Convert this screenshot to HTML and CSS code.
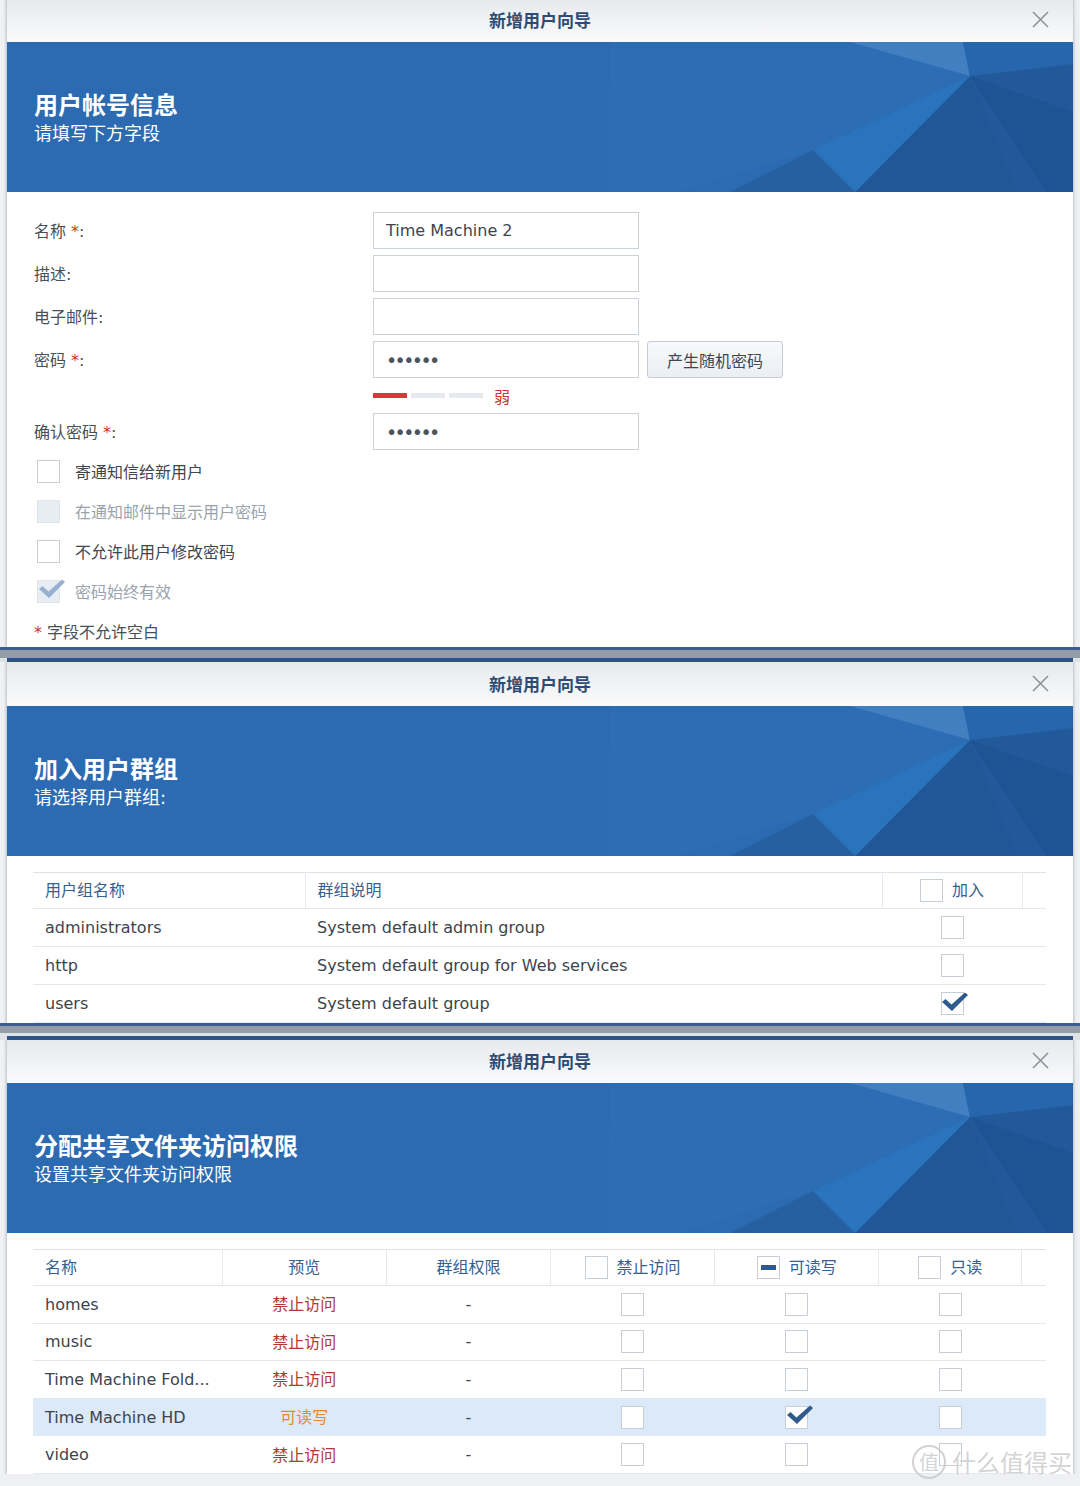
FILE: index.html
```html
<!DOCTYPE html>
<html lang="zh-CN">
<head>
  <meta charset="UTF-8">
  <title>新增用户向导</title>
  <link rel="stylesheet" href="styles.css">
</head>
<body>
<div class="page">

  <!-- 第一步：用户帐号信息 -->
  <div class="shot">
    <div class="side side-left"></div>
    <div class="dialog">
      <div class="titlebar tb-first">
        <span></span>
        <span class="title">新增用户向导</span>
        <span class="close"><svg width="17" height="17" viewBox="0 0 17 17"><path d="M1 1 L16 16 M16 1 L1 16" stroke="#8d939a" stroke-width="1.6" fill="none"/></svg></span>
      </div>
      <div class="banner">
        <svg class="facets" viewBox="0 0 1066 150" preserveAspectRatio="none">
          <rect width="1066" height="150" fill="#2c6ab1"/>
          <polygon points="603,0 843,0 963,34 806,108 673,150 600,150" fill="#2d6db4"/>
          <polygon points="843,0 956,0 963,34" fill="#417fc0"/>
          <polygon points="956,0 1066,0 1066,22 963,34" fill="#2666ad"/>
          <polygon points="963,34 1066,22 1066,150 1012,150" fill="#22599a"/>
          <polygon points="963,34 1066,70 1066,150 1040,150" fill="#1e5494"/>
          <polygon points="963,34 1012,150 848,150" fill="#215796"/>
          <polygon points="806,108 963,34 848,150" fill="#2a74bd"/>
          <polygon points="723,150 806,108 848,150" fill="#2660a0"/>
        </svg>
        <div class="banner-text">
          <h1>用户帐号信息</h1>
          <p>请填写下方字段</p>
        </div>
      </div>
      <div class="form-body">
        <div class="form-grid">
          <label class="field-label">名称 <span class="req">*</span>:</label>
          <div class="input">Time Machine 2</div>
          <span></span>

          <label class="field-label">描述:</label>
          <div class="input"></div>
          <span></span>

          <label class="field-label">电子邮件:</label>
          <div class="input"></div>
          <span></span>

          <label class="field-label">密码 <span class="req">*</span>:</label>
          <div class="input"><span class="dots">••••••</span></div>
          <button class="btn">产生随机密码</button>

          <span></span>
          <div class="strength">
            <span class="seg seg-on"></span><span class="seg"></span><span class="seg"></span>
            <span class="weak">弱</span>
          </div>
          <span></span>

          <label class="field-label">确认密码 <span class="req">*</span>:</label>
          <div class="input"><span class="dots">••••••</span></div>
          <span></span>
        </div>

        <div class="checks">
          <div class="check-row"><span class="box"></span><span>寄通知信给新用户</span></div>
          <div class="check-row disabled"><span class="box box-off"></span><span>在通知邮件中显示用户密码</span></div>
          <div class="check-row"><span class="box"></span><span>不允许此用户修改密码</span></div>
          <div class="check-row disabled"><span class="box box-off"><svg class="tick" width="28" height="24" viewBox="0 0 28 24"><polygon points="1,11 4.5,8 10.5,13.5 24,1.5 27,4 11,20" fill="#97b0cf"/></svg></span><span>密码始终有效</span></div>
        </div>
        <div class="note"><span class="req">*</span> 字段不允许空白</div>
      </div>
    </div>
    <div class="side side-right"></div>
  </div>

  <div class="seam seam-a"></div>

  <!-- 第二步：加入用户群组 -->
  <div class="shot">
    <div class="side side-left side-top"></div>
    <div class="dialog dialog-top">
      <div class="titlebar tb-second">
        <span></span>
        <span class="title">新增用户向导</span>
        <span class="close"><svg width="17" height="17" viewBox="0 0 17 17"><path d="M1 1 L16 16 M16 1 L1 16" stroke="#8d939a" stroke-width="1.6" fill="none"/></svg></span>
      </div>
      <div class="banner">
        <svg class="facets" viewBox="0 0 1066 150" preserveAspectRatio="none">
          <rect width="1066" height="150" fill="#2c6ab1"/>
          <polygon points="603,0 843,0 963,34 806,108 673,150 600,150" fill="#2d6db4"/>
          <polygon points="843,0 956,0 963,34" fill="#417fc0"/>
          <polygon points="956,0 1066,0 1066,22 963,34" fill="#2666ad"/>
          <polygon points="963,34 1066,22 1066,150 1012,150" fill="#22599a"/>
          <polygon points="963,34 1066,70 1066,150 1040,150" fill="#1e5494"/>
          <polygon points="963,34 1012,150 848,150" fill="#215796"/>
          <polygon points="806,108 963,34 848,150" fill="#2a74bd"/>
          <polygon points="723,150 806,108 848,150" fill="#2660a0"/>
        </svg>
        <div class="banner-text">
          <h1>加入用户群组</h1>
          <p>请选择用户群组:</p>
        </div>
      </div>
      <div class="table-body">
        <table class="grid groups">
          <colgroup><col class="c-gname"><col class="c-gdesc"><col class="c-join"><col class="c-pad"></colgroup>
          <thead>
            <tr><th>用户组名称</th><th>群组说明</th><th class="mid"><span class="head-check"><span class="box"></span><span>加入</span></span></th><th class="pad"></th></tr>
          </thead>
          <tbody>
            <tr><td>administrators</td><td>System default admin group</td><td class="mid"><span class="box"></span></td><td></td></tr>
            <tr><td>http</td><td>System default group for Web services</td><td class="mid"><span class="box"></span></td><td></td></tr>
            <tr><td>users</td><td>System default group</td><td class="mid"><span class="box"><svg class="tick" width="28" height="24" viewBox="0 0 28 24"><polygon points="1,11 4.5,8 10.5,13.5 24,1.5 27,4 11,20" fill="#2e5a8c"/></svg></span></td><td></td></tr>
          </tbody>
        </table>
      </div>
    </div>
    <div class="side side-right side-top"></div>
  </div>

  <div class="seam seam-b"></div>

  <!-- 第三步：分配共享文件夹访问权限 -->
  <div class="shot">
    <div class="side side-left side-top"></div>
    <div class="dialog dialog-top">
      <div class="titlebar tb-third">
        <span></span>
        <span class="title">新增用户向导</span>
        <span class="close"><svg width="17" height="17" viewBox="0 0 17 17"><path d="M1 1 L16 16 M16 1 L1 16" stroke="#8d939a" stroke-width="1.6" fill="none"/></svg></span>
      </div>
      <div class="banner">
        <svg class="facets" viewBox="0 0 1066 150" preserveAspectRatio="none">
          <rect width="1066" height="150" fill="#2c6ab1"/>
          <polygon points="603,0 843,0 963,34 806,108 673,150 600,150" fill="#2d6db4"/>
          <polygon points="843,0 956,0 963,34" fill="#417fc0"/>
          <polygon points="956,0 1066,0 1066,22 963,34" fill="#2666ad"/>
          <polygon points="963,34 1066,22 1066,150 1012,150" fill="#22599a"/>
          <polygon points="963,34 1066,70 1066,150 1040,150" fill="#1e5494"/>
          <polygon points="963,34 1012,150 848,150" fill="#215796"/>
          <polygon points="806,108 963,34 848,150" fill="#2a74bd"/>
          <polygon points="723,150 806,108 848,150" fill="#2660a0"/>
        </svg>
        <div class="banner-text">
          <h1>分配共享文件夹访问权限</h1>
          <p>设置共享文件夹访问权限</p>
        </div>
      </div>
      <div class="table-body">
        <table class="grid shares">
          <colgroup><col class="c-name"><col class="c-mid"><col class="c-mid"><col class="c-mid"><col class="c-mid"><col class="c-ro"><col class="c-pad"></colgroup>
          <thead>
            <tr>
              <th>名称</th>
              <th class="mid">预览</th>
              <th class="mid">群组权限</th>
              <th class="mid"><span class="head-check"><span class="box"></span><span>禁止访问</span></span></th>
              <th class="mid"><span class="head-check"><span class="box box-part"><span class="bar"></span></span><span>可读写</span></span></th>
              <th class="mid"><span class="head-check"><span class="box"></span><span>只读</span></span></th>
              <th class="pad"></th>
            </tr>
          </thead>
          <tbody>
            <tr><td>homes</td><td class="mid deny">禁止访问</td><td class="mid">-</td><td class="mid"><span class="box"></span></td><td class="mid"><span class="box"></span></td><td class="mid"><span class="box"></span></td><td></td></tr>
            <tr><td>music</td><td class="mid deny">禁止访问</td><td class="mid">-</td><td class="mid"><span class="box"></span></td><td class="mid"><span class="box"></span></td><td class="mid"><span class="box"></span></td><td></td></tr>
            <tr><td>Time Machine Fold...</td><td class="mid deny">禁止访问</td><td class="mid">-</td><td class="mid"><span class="box"></span></td><td class="mid"><span class="box"></span></td><td class="mid"><span class="box"></span></td><td></td></tr>
            <tr class="selected"><td>Time Machine HD</td><td class="mid rw">可读写</td><td class="mid">-</td><td class="mid"><span class="box"></span></td><td class="mid"><span class="box"><svg class="tick" width="28" height="24" viewBox="0 0 28 24"><polygon points="1,11 4.5,8 10.5,13.5 24,1.5 27,4 11,20" fill="#2e5a8c"/></svg></span></td><td class="mid"><span class="box"></span></td><td></td></tr>
            <tr><td>video</td><td class="mid deny">禁止访问</td><td class="mid">-</td><td class="mid"><span class="box"></span></td><td class="mid"><span class="box"></span></td><td class="mid"><span class="box"></span></td><td></td></tr>
          </tbody>
        </table>
      </div>
    </div>
    <div class="side side-right side-top"></div>
  </div>

  <div class="watermark"><span class="wm-ring">值</span>什么值得买</div>
</div>
</body>
</html>
```

FILE: styles.css
```css
* {
  box-sizing: border-box;
}

body {
  margin: 0;
  background: #eef0f3;
  font-family: "DejaVu Sans", "Noto Sans CJK SC", sans-serif;
  color: #444c55;
}

.page {
  position: relative;
  width: 1080px;
  height: 1486px;
  overflow: hidden;
}

.shot {
  display: flex;
}

/* bandes de la fenêtre derrière le dialogue */
.side {
  width: 7px;
  flex: none;
}

.side-left {
  background: linear-gradient(to right, #f2f3f5 0, #eceef1 60%, #c4c9cf 100%);
}

.side-right {
  background: linear-gradient(to right, #c4c9cf 0, #e9ebee 35%, #f2f3f5 100%);
}

.side-top {
  border-top: 4px solid #dde1e5;
}

.dialog {
  width: 1066px;
  flex: none;
  background: #fff;
}

.dialog-top {
  border-top: 4px solid #2d5286;
}

/* barre de titre */
.titlebar {
  display: grid;
  grid-template-columns: 1fr auto 1fr;
  align-items: center;
  padding-bottom: 2px;
  background: linear-gradient(#e6e9ed, #fbfbfc);
}

.tb-first {
  height: 42px;
  padding-bottom: 3px;
}

.tb-second {
  height: 44px;
}

.tb-third {
  height: 43px;
}

.title {
  font-size: 17px;
  font-weight: bold;
  color: #2c4c74;
}

.close {
  justify-self: end;
  margin-right: 24px;
  display: flex;
}

/* bannière bleue */
.banner {
  display: grid;
  height: 150px;
}

.facets,
.banner-text {
  grid-area: 1 / 1;
}

.facets {
  width: 1066px;
  height: 150px;
  display: block;
}

.banner-text {
  align-self: center;
  padding-left: 27px;
  padding-top: 4px;
  color: #fff;
}

.banner-text h1 {
  margin: 0;
  font-size: 24px;
  line-height: 30px;
  font-weight: bold;
}

.banner-text p {
  margin: 0;
  font-size: 18px;
  line-height: 26px;
}

/* formulaire */
.form-body {
  height: 455px;
  padding: 20px 27px 0;
}

.form-grid {
  display: grid;
  grid-template-columns: 331px 266px auto;
  column-gap: 8px;
  row-gap: 6px;
  align-items: center;
}

.field-label {
  font-size: 16px;
  color: #474f58;
  padding-bottom: 2px;
}

.req {
  color: #c9372c;
}

.input {
  height: 37px;
  border: 1px solid #cbd2da;
  padding: 0 12px;
  display: flex;
  align-items: center;
  font-size: 16px;
  color: #3d454e;
}

.dots {
  font-size: 19px;
  letter-spacing: -2.6px;
  color: #4c535b;
}

.btn {
  justify-self: start;
  height: 37px;
  padding: 0 19px;
  border: 1px solid #c5ccd5;
  border-radius: 3px;
  background: linear-gradient(#f8f9fb, #eaeef3);
  font-family: inherit;
  font-size: 16px;
  color: #3e4751;
}

.strength {
  height: 23px;
  display: flex;
  align-items: center;
  gap: 4px;
}

.seg {
  width: 34px;
  height: 5px;
  background: #e6eaee;
}

.seg-on {
  background: #d9383a;
}

.weak {
  margin-left: 7px;
  font-size: 16px;
  color: #c9372c;
}

.checks {
  margin-top: 1px;
  display: flex;
  flex-direction: column;
}

.check-row {
  height: 40px;
  display: flex;
  align-items: center;
  gap: 15px;
  padding-left: 3px;
  font-size: 16px;
  color: #3f464e;
}

.check-row.disabled {
  color: #9aa3ad;
}

.note {
  margin-top: 11px;
  font-size: 16px;
  line-height: 22px;
  color: #474f58;
}

/* cases à cocher */
.box {
  width: 23px;
  height: 23px;
  flex: none;
  display: inline-flex;
  align-items: center;
  justify-content: center;
  border: 1px solid #c7ced6;
  background: #fff;
  overflow: visible;
  vertical-align: middle;
}

.box-off {
  background: #e8edf3;
  border-color: #dfe5eb;
}

.tick {
  flex: none;
  margin: -2px -6px 0 0;
}

.box-part .bar {
  width: 15px;
  height: 5px;
  background: #2d5a8e;
}

.head-check {
  display: inline-flex;
  align-items: center;
  gap: 9px;
  vertical-align: middle;
  line-height: 23px;
  margin-top: 3px;
}

/* tableaux */
.table-body {
  padding: 16px 27px 0 26px;
}

.grid {
  width: 1013px;
  border-collapse: collapse;
  table-layout: fixed;
  font-size: 16px;
}

.grid th {
  height: 36px;
  padding: 0 12px 3px;
  text-align: left;
  font-weight: normal;
  color: #36608f;
  vertical-align: middle;
  border-top: 1px solid #dde2e8;
  border-bottom: 1px solid #e3e7ec;
  border-right: 1px solid #e6eaee;
}

.grid th.pad {
  border-right: none;
}

.grid td {
  padding: 0 12px;
  color: #3c444d;
  border-bottom: 1px solid #e4e8ec;
  white-space: nowrap;
  overflow: hidden;
}

.groups td {
  height: 38px;
}

.shares td {
  height: 37.6px;
}

.grid .mid {
  text-align: center;
}

.grid td.deny,
.grid td.rw {
  padding-bottom: 2px;
}

.c-gname {
  width: 272px;
}

.c-gdesc {
  width: 577px;
}

.c-join {
  width: 140px;
}

.c-pad {
  width: 24px;
}

.c-name {
  width: 189px;
}

.c-mid {
  width: 164px;
}

.c-ro {
  width: 143px;
}

.deny {
  color: #b3392f !important;
}

.rw {
  color: #e38b2c !important;
}

.selected td {
  background: #dce9f8;
}

/* jointures entre les captures */
.seam-a {
  height: 11px;
  border-top: 3px solid #3b6090;
  background: #929da8;
}

.seam-b {
  height: 13px;
  border-top: 3px solid #3b6090;
  border-bottom: 3px solid #dfe3e7;
  background: #929da8;
}

/* filigrane */
.watermark {
  position: absolute;
  left: 912px;
  top: 1444px;
  display: flex;
  align-items: center;
  gap: 6px;
  font-size: 24px;
  color: rgba(200, 200, 200, 0.8);
  text-shadow: 0 0 2px #fff;
}

.wm-ring {
  width: 34px;
  height: 34px;
  border: 2px solid rgba(200, 200, 200, 0.8);
  border-radius: 50%;
  display: flex;
  align-items: center;
  justify-content: center;
  font-size: 20px;
}
```
